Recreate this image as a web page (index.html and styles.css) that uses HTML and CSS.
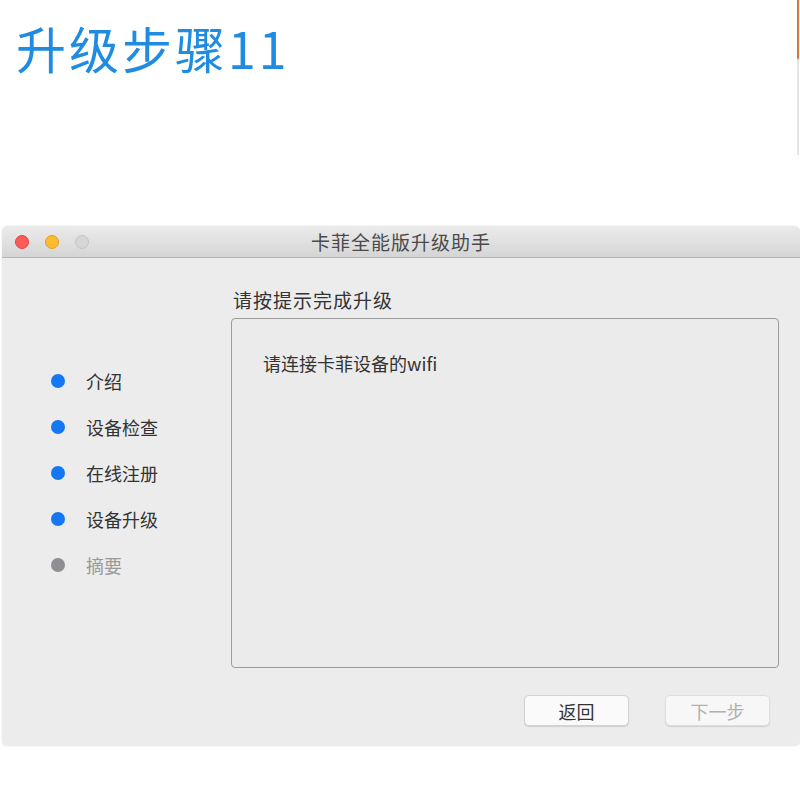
FILE: index.html
```html
<!DOCTYPE html>
<html lang="zh-CN">
<head>
<meta charset="utf-8">
<title>升级步骤11</title>
<link rel="stylesheet" href="styles.css">
</head>
<body>
<div class="page">
  <div class="edge-mark"></div>
  <h1 class="headline">升级步骤11</h1>
  <div class="window">
    <div class="titlebar">
      <div class="lights">
        <span class="light red"></span>
        <span class="light yellow"></span>
        <span class="light grey"></span>
      </div>
      <div class="win-title">卡菲全能版升级助手</div>
    </div>
    <div class="win-body">
      <ul class="steps">
        <li class="step done"><span class="dot"></span>介绍</li>
        <li class="step done"><span class="dot"></span>设备检查</li>
        <li class="step done"><span class="dot"></span>在线注册</li>
        <li class="step done"><span class="dot"></span>设备升级</li>
        <li class="step todo"><span class="dot"></span>摘要</li>
      </ul>
      <div class="main">
        <div class="main-heading">请按提示完成升级</div>
        <div class="panel">
          <p class="panel-text">请连接卡菲设备的wifi</p>
        </div>
        <div class="buttons">
          <button class="btn">返回</button>
          <button class="btn disabled">下一步</button>
        </div>
      </div>
    </div>
  </div>
</div>
</body>
</html>
```

FILE: styles.css
```css
* { box-sizing: border-box; }
html, body {
  margin: 0;
  padding: 0;
  background: #ffffff;
  font-family: "Noto Sans CJK SC", "Noto Sans", sans-serif;
}
.page {
  position: relative;
  width: 800px;
  height: 800px;
  overflow: hidden;
  padding-top: 19px;
}
.edge-mark {
  position: absolute;
  right: 1px;
  top: 0;
  width: 2px;
  height: 155px;
  background: linear-gradient(#d27a45 0, #d27a45 58px, #e6e6e6 60px, #e6e6e6 155px);
}
.headline {
  margin: 0 0 0 16px;
  font-size: 50px;
  line-height: 56px;
  font-weight: 400;
  color: #1f8ce2;
  letter-spacing: 3px;
}
.window {
  margin: 151px 0 0 2px;
  width: 798px;
  height: 520px;
  border-radius: 6px 6px 5px 5px;
  background: #ececec;
  box-shadow: 0 0 2px rgba(0,0,0,0.12);
  display: flex;
  flex-direction: column;
  overflow: hidden;
}
.titlebar {
  height: 32px;
  flex: none;
  background: linear-gradient(#ebebeb, #d5d5d5);
  border-bottom: 1px solid #b5b5b5;
  display: flex;
  align-items: center;
  position: relative;
}
.lights {
  display: flex;
  gap: 16px;
  padding-left: 13px;
}
.light {
  width: 14px;
  height: 14px;
  border-radius: 50%;
  display: block;
}
.light.red { background: #fc5b57; border: 1px solid #e0443e; }
.light.yellow { background: #fdbb2d; border: 1px solid #e0a026; }
.light.grey { background: #d6d6d6; border: 1px solid #c4c4c4; }
.win-title {
  position: absolute;
  left: 0;
  right: 0;
  text-align: center;
  font-size: 19px;
  letter-spacing: 1px;
  color: #4a4a4a;
  line-height: 32px;
}
.win-body {
  flex: 1;
  display: flex;
}
.steps {
  list-style: none;
  margin: 0;
  padding: 100px 0 0 49px;
  width: 229px;
  flex: none;
}
.step {
  height: 46px;
  display: flex;
  align-items: center;
  font-size: 18px;
  color: #333;
}
.step .dot {
  width: 14px;
  height: 14px;
  border-radius: 50%;
  margin-right: 21px;
  flex: none;
}
.step.done .dot { background: #1577f2; }
.step.todo { color: #9a9a9a; }
.step.todo .dot { background: #8e8e93; }
.main {
  flex: 1;
  padding: 30px 21px 0 0;
  display: flex;
  flex-direction: column;
}
.main-heading {
  font-size: 19px;
  line-height: 24px;
  letter-spacing: 1px;
  color: #333;
  padding-left: 2px;
}
.panel {
  margin-top: 6px;
  height: 350px;
  border: 1.5px solid #9b9b9b;
  border-radius: 4px;
  background: #ebebeb;
  padding: 32px 0 0 31px;
}
.panel-text {
  margin: 0;
  font-size: 18px;
  line-height: 24px;
  color: #333;
}
.buttons {
  display: flex;
  justify-content: flex-end;
  gap: 36px;
  margin-top: 27px;
  padding-right: 9px;
}
.btn {
  width: 105px;
  height: 31px;
  border: 1px solid #d2d2d2;
  border-radius: 5px;
  background: #fafafa;
  box-shadow: 0 1px 1px rgba(0,0,0,0.12);
  font-family: "Noto Sans CJK SC", "Noto Sans", sans-serif;
  font-size: 18px;
  color: #333;
  padding: 0;
}
.btn.disabled {
  color: #b0b0b0;
  background: #f7f7f7;
  border-color: #dedede;
}
```
